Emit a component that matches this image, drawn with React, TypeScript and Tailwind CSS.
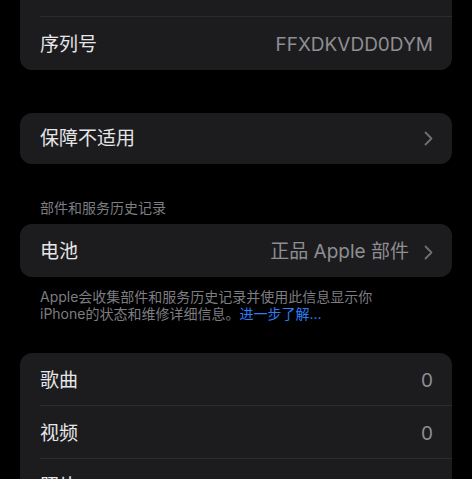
import React from 'react';

const font = { fontFamily: '"Inter", "Noto Sans CJK SC", sans-serif' };

const Chevron: React.FC = () => (
  <svg width="9" height="15" viewBox="0 0 9 15" className="shrink-0">
    <path d="M1.5 1.5 L7.5 7.5 L1.5 13.5" fill="none" stroke="#6e6e73" strokeWidth="1.8" strokeLinecap="round" strokeLinejoin="round" />
  </svg>
);

type RowProps = { label: string; value?: string; chevron?: boolean; divider?: boolean };

const Row: React.FC<RowProps> = ({ label, value, chevron, divider }) => (
  <div className="relative flex h-[53px] items-center pl-5 pr-[19px]">
    <span className="pt-[3px] text-[19px] text-[#e6e6e8]">{label}</span>
    <div className="ml-auto flex items-center gap-[15px] pt-[3px]">
      {value && <span className="text-[19px] text-[#8e8e93]">{value}</span>}
      {chevron && <Chevron />}
    </div>
    {divider && <div className="absolute bottom-0 left-5 right-0 h-px bg-[#2c2c2e]" />}
  </div>
);

const Card: React.FC<{ children: React.ReactNode; className?: string }> = ({ children, className }) => (
  <div className={`mx-5 overflow-hidden rounded-[12px] bg-[#1c1c1e] ${className ?? ''}`}>{children}</div>
);

export default function App() {
  return (
    <div className="h-[479px] w-[472px] overflow-hidden bg-black" style={font}>
      <div className="-mt-[36px]">
        <Card>
          <Row label="型号号码" value="MQ8N3CH/A" divider />
          <Row label="序列号" value="FFXDKVDD0DYM" />
        </Card>

        <Card className="mt-[43px]">
          <div className="flex h-[51px] items-center pl-5 pr-[19px]">
            <span className="pt-[2px] text-[19px] text-[#e6e6e8]">保障不适用</span>
            <div className="ml-auto"><Chevron /></div>
          </div>
        </Card>

        <div className="mt-[35px] px-10 text-[14px] leading-[18px] text-[#7d7d82]">部件和服务历史记录</div>

        <Card className="mt-[7px]">
          <Row label="电池" value="正品 Apple 部件" chevron />
        </Card>

        <p className="mt-[11px] px-10 text-[14px] leading-[17px] text-[#7d7d82]">
          Apple会收集部件和服务历史记录并使用此信息显示你
          <br />
          iPhone的状态和维修详细信息。<span className="text-[#2f7df6]">进一步了解...</span>
        </p>

        <Card className="mt-[31px]">
          <Row label="歌曲" value="0" divider />
          <Row label="视频" value="0" divider />
          <Row label="照片" value="0" />
        </Card>
      </div>
    </div>
  );
}
